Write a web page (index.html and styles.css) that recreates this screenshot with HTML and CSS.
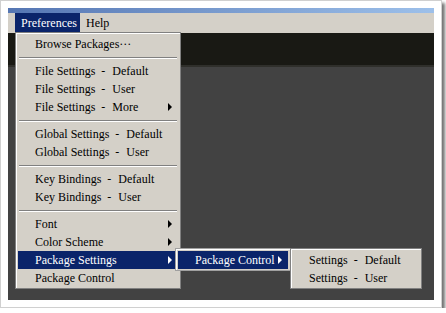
FILE: index.html
```html
<!DOCTYPE html>
<html lang="en">

<head>
    <meta charset="UTF-8">
    <title>Preferences menu</title>
    <link rel="stylesheet" href="styles.css">
</head>

<body>
    <div class="frame">
        <div class="window">
            <div class="title-strip"></div>
            <div class="menubar">
                <span class="menubar-item active">Preferences</span>
                <span class="menubar-item">Help</span>
            </div>
            <div class="toolbar"></div>
            <div class="editor"></div>

            <div class="menu main-menu">
                <div class="item">Browse Packages···</div>
                <div class="sep"></div>
                <div class="item">File Settings<span class="dash">-</span>Default</div>
                <div class="item">File Settings<span class="dash">-</span>User</div>
                <div class="item has-sub">File Settings<span class="dash">-</span>More<span class="arrow"></span></div>
                <div class="sep"></div>
                <div class="item">Global Settings<span class="dash">-</span>Default</div>
                <div class="item">Global Settings<span class="dash">-</span>User</div>
                <div class="sep"></div>
                <div class="item">Key Bindings<span class="dash">-</span>Default</div>
                <div class="item">Key Bindings<span class="dash">-</span>User</div>
                <div class="sep"></div>
                <div class="item has-sub">Font<span class="arrow"></span></div>
                <div class="item has-sub">Color Scheme<span class="arrow"></span></div>
                <div class="item has-sub selected">Package Settings<span class="arrow"></span></div>
                <div class="item">Package Control</div>
            </div>

            <div class="menu sub-menu">
                <div class="item has-sub selected">Package Control<span class="arrow"></span></div>
            </div>

            <div class="menu sub-sub-menu">
                <div class="item">Settings<span class="dash">-</span>Default</div>
                <div class="item">Settings<span class="dash">-</span>User</div>
            </div>
        </div>
    </div>
</body>

</html>
```

FILE: styles.css
```css
body {
    margin: 0;
    padding: 0;
    background-color: #fff;
    font-family: 'Liberation Serif', serif;
    font-size: 12px;
}

.frame {
    width: 426px;
    height: 292px;
    padding: 7px;
    background-color: #fff;
    border: 1px solid #d0d0d0;
    box-shadow: 3px 3px 3px rgba(0, 0, 0, 0.55);
}

.window {
    position: relative;
    width: 426px;
    height: 292px;
    display: flex;
    flex-direction: column;
    background-color: #424242;
}

.title-strip {
    height: 5px;
    background: linear-gradient(to right, #5576b3, #9dc0ea);
}

.menubar {
    height: 20px;
    display: flex;
    align-items: stretch;
    padding-left: 7px;
    background-color: #d4d0c8;
}

.menubar-item {
    display: flex;
    align-items: center;
    padding: 0 5px 0 6px;
    color: #000;
}

.menubar-item.active {
    background-color: #0a246a;
    color: #fff;
    width: 54px;
}

.toolbar {
    height: 32px;
    background-color: #191914;
    border-bottom: 2px solid #2f2f2b;
}

.editor {
    flex: 1;
    background-color: #424242;
}

.menu {
    position: absolute;
    box-sizing: border-box;
    background-color: #d4d0c8;
    border: 1px solid #808080;
    box-shadow: inset 1px 1px 0 #fff;
    padding: 2px 2px 1px 2px;
}

.main-menu {
    left: 7px;
    top: 24px;
    width: 166px;
    height: 257px;
}

.sub-menu {
    left: 167px;
    top: 240px;
    width: 116px;
    height: 23px;
    border-color: #a0a0a0;
    z-index: 2;
}

.sub-sub-menu {
    left: 282px;
    top: 240px;
    width: 132px;
    height: 41px;
    z-index: 3;
}

.item {
    height: 18px;
    display: flex;
    align-items: center;
    padding-left: 17px;
    color: #000;
    white-space: nowrap;
}

.sub-sub-menu .item {
    padding-left: 16px;
}

.item.selected {
    background-color: #0a246a;
    color: #fff;
}

.dash {
    margin: 0 7px 0 6px;
}

.arrow {
    margin-left: auto;
    margin-right: 6px;
    width: 0;
    height: 0;
    border-top: 4px solid transparent;
    border-bottom: 4px solid transparent;
    border-left: 4px solid #000;
}

.selected .arrow {
    border-left-color: #fff;
}

.sep {
    height: 9px;
    display: flex;
    flex-direction: column;
    justify-content: center;
    padding: 0 1px;
}

.sep::before {
    content: '';
    display: block;
    height: 1px;
    background-color: #808080;
    border-bottom: 1px solid #fff;
}
```
